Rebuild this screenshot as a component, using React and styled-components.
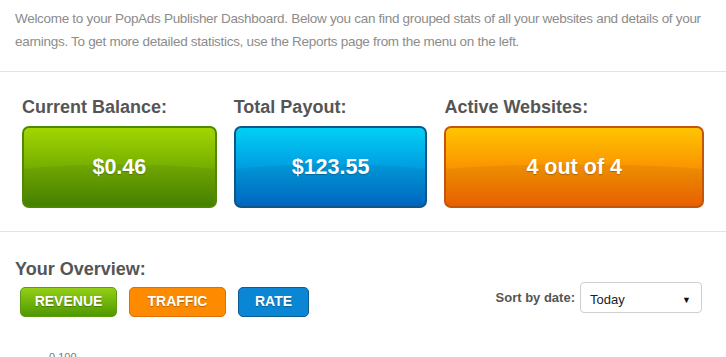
import React from 'react';
import styled, { createGlobalStyle } from 'styled-components';

const GlobalStyle = createGlobalStyle`
    html, body {
        margin: 0;
        padding: 0;
        background: #fff;
    }

    body {
        font-family: "Liberation Sans", Arial, sans-serif;
    }
`;

const Page = styled.div`
    width: 726px;
    height: 357px;
    overflow: hidden;
    background: #fff;
`;

const Intro = styled.section`
    height: 72px;
    box-sizing: border-box;
    padding: 7px 4px 0 15px;
    border-bottom: 1px solid #e3e3e3;

    font-size: 13.5px;
    letter-spacing: -0.3px;
    line-height: 23px;
    color: #8c8c8c;
`;

const Stats = styled.section`
    display: flex;
    gap: 17px;
    height: 160px;
    box-sizing: border-box;
    padding: 24px 22px 0;
    border-bottom: 1px solid #e3e3e3;
`;

const StatCard = styled.div`
    display: flex;
    flex-direction: column;
    gap: 8px;
    width: ${props => props.width}px;
`;

const Label = styled.div`
    font-size: 18px;
    font-weight: bold;
    line-height: 22px;
    color: #555;
`;

const palettes = {
    green: { top: '#a2d600', bottom: '#4a8800', border: '#4e8a00' },
    blue: { top: '#00d0f6', bottom: '#006ccc', border: '#0e5784' },
    orange: { top: '#ffc400', bottom: '#f66600', border: '#c4560c' },
};

const StatBox = styled.div`
    display: flex;
    align-items: center;
    justify-content: center;
    height: 82px;
    box-sizing: border-box;
    border: 2px solid ${props => palettes[props.color].border};
    border-radius: 7px;
    background:
        radial-gradient(ellipse 120% 62% at 50% 108%, rgba(0, 0, 0, 0.06) 98%, transparent 100%),
        linear-gradient(to bottom, ${props => palettes[props.color].top}, ${props => palettes[props.color].bottom});

    font-size: 21.5px;
    font-weight: bold;
    color: #fff;
    text-shadow: 0 1px 1px rgba(0, 0, 0, 0.25);
`;

const Overview = styled.section`
    padding: 26px 15px 0;
`;

const Heading = styled.div`
    font-size: 18px;
    font-weight: bold;
    line-height: 22px;
    color: #555;
`;

const ControlsRow = styled.div`
    display: flex;
    align-items: flex-start;
    justify-content: space-between;
    margin-top: 2px;
    padding-left: 5px;
    padding-right: 9px;
`;

const Tabs = styled.div`
    display: flex;
    gap: 12px;
    margin-top: 5px;
`;

const tabColors = {
    green: { bg: 'linear-gradient(to bottom, #93cf16, #4e9800)', border: '#5c9a12' },
    orange: { bg: '#fe8a00', border: '#dc6f05' },
    blue: { bg: '#0a86d4', border: '#0b5d93' },
};

const Tab = styled.button`
    height: 30px;
    width: ${props => props.width}px;
    box-sizing: border-box;
    padding: 0 0 2px;
    border: 1px solid ${props => tabColors[props.color].border};
    border-radius: 5px;
    background: ${props => tabColors[props.color].bg};

    font-family: inherit;
    font-size: 14px;
    font-weight: bold;
    color: #fff;
    text-shadow: 0 1px 1px rgba(0, 0, 0, 0.3);
`;

const Sort = styled.div`
    display: flex;
    align-items: center;
    gap: 5px;
`;

const SortLabel = styled.span`
    font-size: 13px;
    font-weight: bold;
    color: #555;
`;

const Select = styled.div`
    display: flex;
    align-items: center;
    justify-content: space-between;
    width: 122px;
    height: 31px;
    box-sizing: border-box;
    padding: 4px 10px 0 9px;
    border: 1px solid #cfcfcf;
    border-radius: 4px;

    font-size: 13px;
    color: #222;
`;

const Arrow = styled.span`
    font-size: 9px;
    color: #111;
`;

const AxisLabel = styled.div`
    margin: 34px 0 0 34px;
    font-size: 11px;
    color: #777;
`;

export default function App() {
    return (
        <Page>
            <GlobalStyle />
            <Intro>
                Welcome to your PopAds Publisher Dashboard. Below you can find grouped stats of all your websites and details of your
                earnings. To get more detailed statistics, use the Reports page from the menu on the left.
            </Intro>

            <Stats>
                <StatCard width={195}>
                    <Label>Current Balance:</Label>
                    <StatBox color="green">$0.46</StatBox>
                </StatCard>
                <StatCard width={194}>
                    <Label>Total Payout:</Label>
                    <StatBox color="blue">$123.55</StatBox>
                </StatCard>
                <StatCard width={260}>
                    <Label>Active Websites:</Label>
                    <StatBox color="orange">4 out of 4</StatBox>
                </StatCard>
            </Stats>

            <Overview>
                <Heading>Your Overview:</Heading>
                <ControlsRow>
                    <Tabs>
                        <Tab color="green" width={97}>REVENUE</Tab>
                        <Tab color="orange" width={97}>TRAFFIC</Tab>
                        <Tab color="blue" width={71}>RATE</Tab>
                    </Tabs>
                    <Sort>
                        <SortLabel>Sort by date:</SortLabel>
                        <Select>
                            <span>Today</span>
                            <Arrow>▼</Arrow>
                        </Select>
                    </Sort>
                </ControlsRow>
                <AxisLabel>0.100</AxisLabel>
            </Overview>
        </Page>
    );
}
